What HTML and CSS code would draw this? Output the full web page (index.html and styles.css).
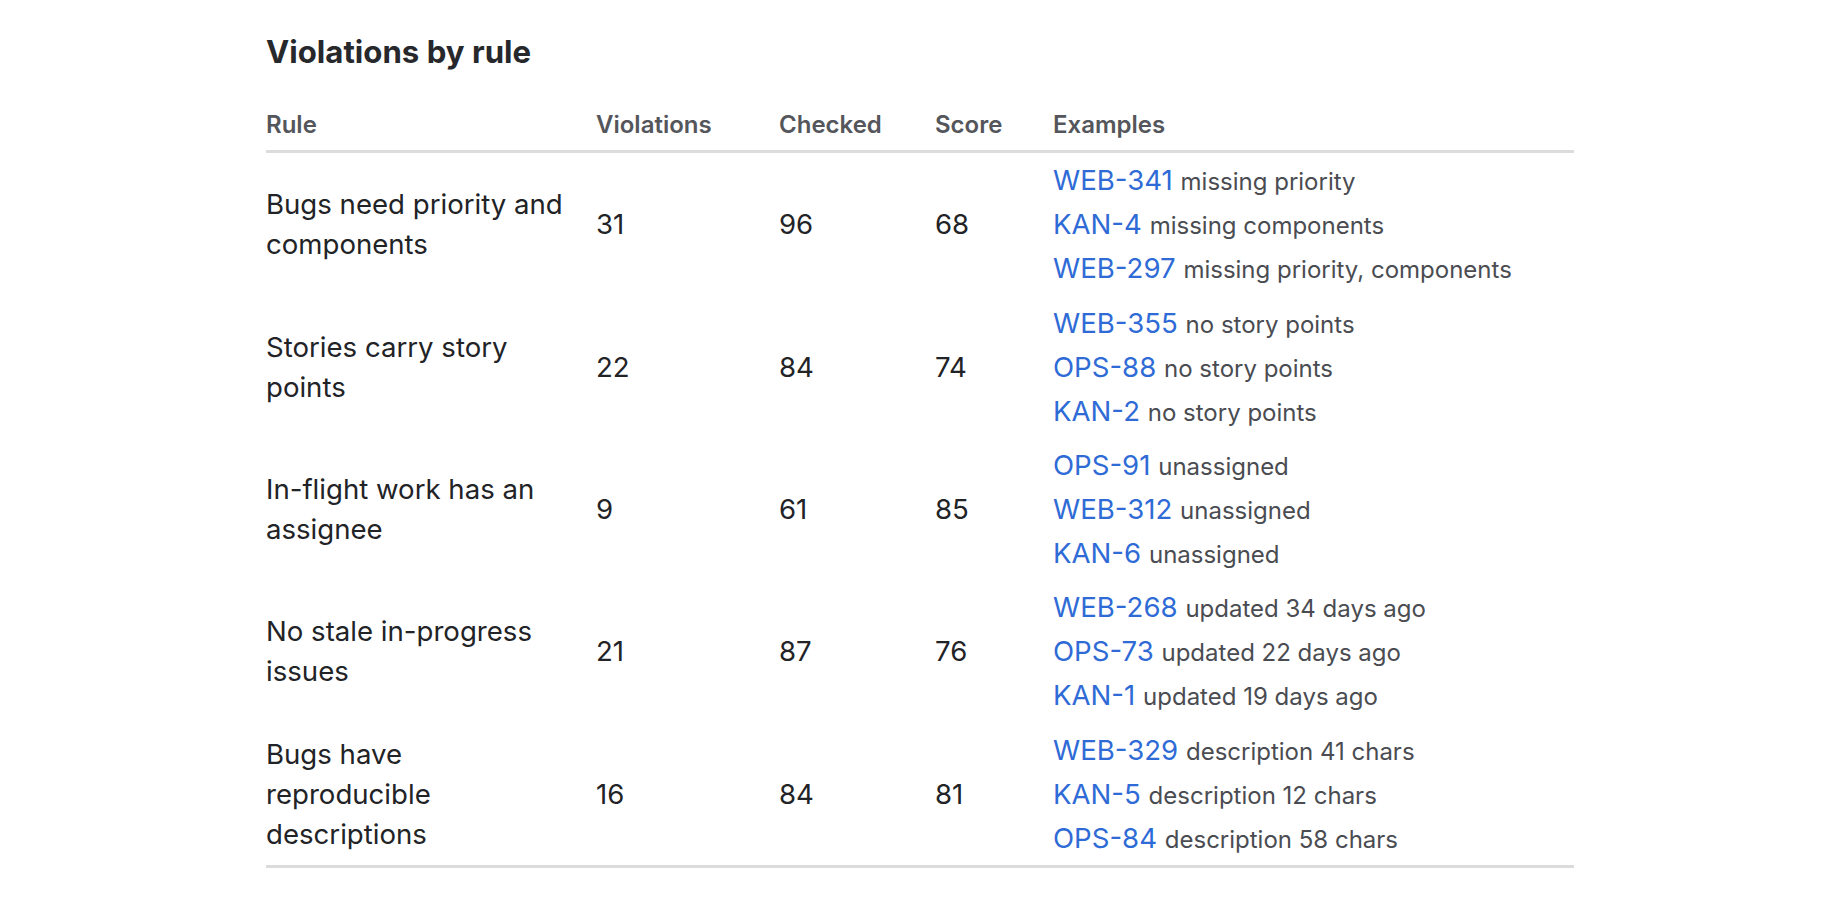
FILE: index.html
```html
<!DOCTYPE html>
<html>
<head>
<meta charset="utf-8">
<link rel="stylesheet" href="styles.css">
</head>
<body>
<section class="panel">
  <h2 class="title">Violations by rule</h2>
  <table class="rules">
    <colgroup>
      <col class="c-rule"><col class="c-viol"><col class="c-check"><col class="c-score"><col class="c-ex">
    </colgroup>
    <thead>
      <tr><th>Rule</th><th>Violations</th><th>Checked</th><th>Score</th><th>Examples</th></tr>
    </thead>
    <tbody>
      <tr>
        <td class="rule">Bugs need priority and components</td><td>31</td><td>96</td><td>68</td>
        <td class="ex">
          <div class="eg"><a class="key">WEB-341</a> <span class="note">missing priority</span></div>
          <div class="eg"><a class="key">KAN-4</a> <span class="note">missing components</span></div>
          <div class="eg"><a class="key">WEB-297</a> <span class="note">missing priority, components</span></div>
        </td>
      </tr>
      <tr>
        <td class="rule">Stories carry story points</td><td>22</td><td>84</td><td>74</td>
        <td class="ex">
          <div class="eg"><a class="key">WEB-355</a> <span class="note">no story points</span></div>
          <div class="eg"><a class="key">OPS-88</a> <span class="note">no story points</span></div>
          <div class="eg"><a class="key">KAN-2</a> <span class="note">no story points</span></div>
        </td>
      </tr>
      <tr>
        <td class="rule">In-flight work has an assignee</td><td>9</td><td>61</td><td>85</td>
        <td class="ex">
          <div class="eg"><a class="key">OPS-91</a> <span class="note">unassigned</span></div>
          <div class="eg"><a class="key">WEB-312</a> <span class="note">unassigned</span></div>
          <div class="eg"><a class="key">KAN-6</a> <span class="note">unassigned</span></div>
        </td>
      </tr>
      <tr>
        <td class="rule">No stale in-progress issues</td><td>21</td><td>87</td><td>76</td>
        <td class="ex">
          <div class="eg"><a class="key">WEB-268</a> <span class="note">updated 34 days ago</span></div>
          <div class="eg"><a class="key">OPS-73</a> <span class="note">updated 22 days ago</span></div>
          <div class="eg"><a class="key">KAN-1</a> <span class="note">updated 19 days ago</span></div>
        </td>
      </tr>
      <tr>
        <td class="rule">Bugs have reproducible descriptions</td><td>16</td><td>84</td><td>81</td>
        <td class="ex">
          <div class="eg"><a class="key">WEB-329</a> <span class="note">description 41 chars</span></div>
          <div class="eg"><a class="key">KAN-5</a> <span class="note">description 12 chars</span></div>
          <div class="eg"><a class="key">OPS-84</a> <span class="note">description 58 chars</span></div>
        </td>
      </tr>
    </tbody>
  </table>
</section>
</body>
</html>
```
FILE: styles.css
```css
html, body {
  margin: 0;
  padding: 0;
  background: #ffffff;
}
body {
  font-family: Inter, "Noto Sans", sans-serif;
  color: #222326;
}
.panel {
  width: 1308px;
  margin-left: 266px;
  padding-top: 30px;
}
.title {
  margin: 0 0 36px 0;
  font-size: 31.2px;
  font-weight: 700;
  line-height: 44px;
  color: #27282c;
}
.rules {
  width: 1308px;
  border-collapse: collapse;
  table-layout: fixed;
  border-bottom: 3px solid #dcdcdc;
}
.c-rule { width: 330px; }
.c-viol { width: 183px; }
.c-check { width: 156px; }
.c-score { width: 118px; }
.c-ex { width: 521px; }
th {
  text-align: left;
  font-size: 24px;
  font-weight: 600;
  color: #54565b;
  padding: 0 0 10px 0;
  line-height: 30px;
  border-bottom: 3px solid #dcdcdc;
}
td {
  font-size: 27.6px;
  padding: 5.2px 0;
  vertical-align: middle;
  line-height: 40px;
}
td.rule {
  padding-right: 24px;
}
.eg {
  height: 44px;
  line-height: 44px;
  white-space: nowrap;
}
.key {
  color: #2f6bd6;
  font-size: 27.6px;
}
.note {
  color: #4a4c52;
  font-size: 24px;
}
```
